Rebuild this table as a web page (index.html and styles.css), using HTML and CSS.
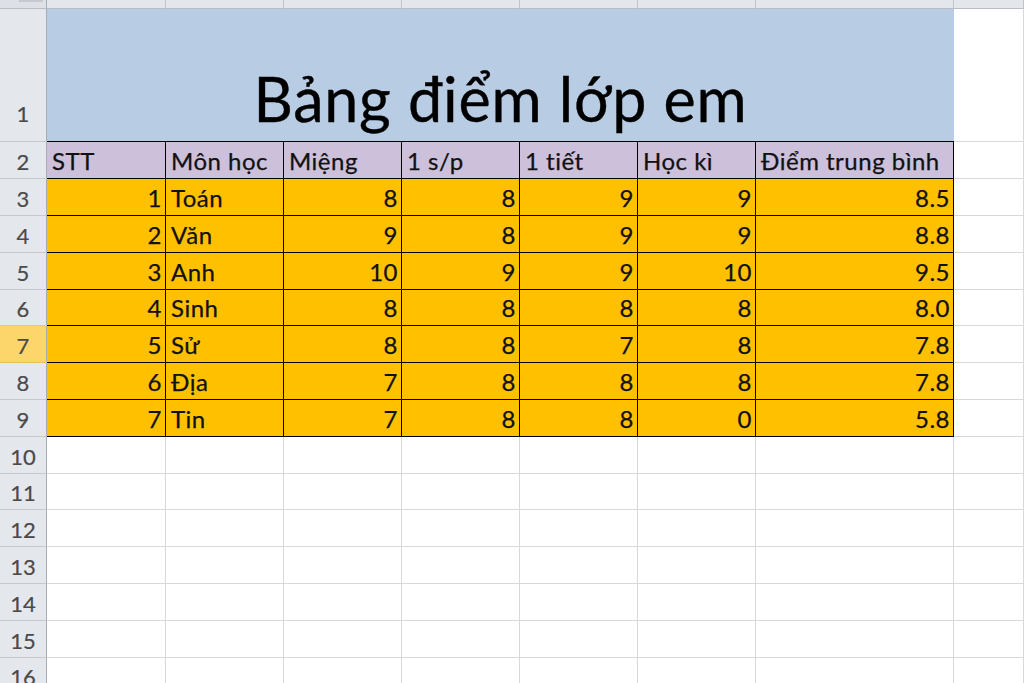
FILE: index.html
```html
<!DOCTYPE html>
<html lang="vi">
<head>
<meta charset="utf-8">
<title>Bảng điểm lớp em</title>
<link rel="stylesheet" href="styles.css">
</head>
<body>
<div class="sheet">
  <div class="corner"><span class="tri"></span></div>
  <div class="colhead"></div><div class="colhead"></div><div class="colhead"></div><div class="colhead"></div><div class="colhead"></div><div class="colhead"></div><div class="colhead"></div><div class="colhead"></div>

  <div class="rowhead r1">1</div>
  <div class="title">Bảng điểm lớp em</div>
  <div class="cell"></div>

  <div class="rowhead">2</div>
  <div class="cell hd">STT</div><div class="cell hd">Môn học</div><div class="cell hd">Miệng</div><div class="cell hd">1 s/p</div><div class="cell hd">1 tiết</div><div class="cell hd">Học kì</div><div class="cell hd last">Điểm trung bình</div>
  <div class="cell"></div>

  <div class="rowhead">3</div>
  <div class="cell d num">1</div><div class="cell d">Toán</div><div class="cell d num">8</div><div class="cell d num">8</div><div class="cell d num">9</div><div class="cell d num">9</div><div class="cell d num last">8.5</div>
  <div class="cell"></div>

  <div class="rowhead">4</div>
  <div class="cell d num">2</div><div class="cell d">Văn</div><div class="cell d num">9</div><div class="cell d num">8</div><div class="cell d num">9</div><div class="cell d num">9</div><div class="cell d num last">8.8</div>
  <div class="cell"></div>

  <div class="rowhead">5</div>
  <div class="cell d num">3</div><div class="cell d">Anh</div><div class="cell d num">10</div><div class="cell d num">9</div><div class="cell d num">9</div><div class="cell d num">10</div><div class="cell d num last">9.5</div>
  <div class="cell"></div>

  <div class="rowhead">6</div>
  <div class="cell d num">4</div><div class="cell d">Sinh</div><div class="cell d num">8</div><div class="cell d num">8</div><div class="cell d num">8</div><div class="cell d num">8</div><div class="cell d num last">8.0</div>
  <div class="cell"></div>

  <div class="rowhead sel">7</div>
  <div class="cell d num">5</div><div class="cell d">Sử</div><div class="cell d num">8</div><div class="cell d num">8</div><div class="cell d num">7</div><div class="cell d num">8</div><div class="cell d num last">7.8</div>
  <div class="cell"></div>

  <div class="rowhead">8</div>
  <div class="cell d num">6</div><div class="cell d">Địa</div><div class="cell d num">7</div><div class="cell d num">8</div><div class="cell d num">8</div><div class="cell d num">8</div><div class="cell d num last">7.8</div>
  <div class="cell"></div>

  <div class="rowhead">9</div>
  <div class="cell d num">7</div><div class="cell d">Tin</div><div class="cell d num">7</div><div class="cell d num">8</div><div class="cell d num">8</div><div class="cell d num">0</div><div class="cell d num last">5.8</div>
  <div class="cell"></div>

  <div class="rowhead">10</div>
  <div class="cell"></div><div class="cell"></div><div class="cell"></div><div class="cell"></div><div class="cell"></div><div class="cell"></div><div class="cell"></div><div class="cell"></div>
  <div class="rowhead">11</div>
  <div class="cell"></div><div class="cell"></div><div class="cell"></div><div class="cell"></div><div class="cell"></div><div class="cell"></div><div class="cell"></div><div class="cell"></div>
  <div class="rowhead">12</div>
  <div class="cell"></div><div class="cell"></div><div class="cell"></div><div class="cell"></div><div class="cell"></div><div class="cell"></div><div class="cell"></div><div class="cell"></div>
  <div class="rowhead">13</div>
  <div class="cell"></div><div class="cell"></div><div class="cell"></div><div class="cell"></div><div class="cell"></div><div class="cell"></div><div class="cell"></div><div class="cell"></div>
  <div class="rowhead">14</div>
  <div class="cell"></div><div class="cell"></div><div class="cell"></div><div class="cell"></div><div class="cell"></div><div class="cell"></div><div class="cell"></div><div class="cell"></div>
  <div class="rowhead">15</div>
  <div class="cell"></div><div class="cell"></div><div class="cell"></div><div class="cell"></div><div class="cell"></div><div class="cell"></div><div class="cell"></div><div class="cell"></div>
  <div class="rowhead">16</div>
  <div class="cell"></div><div class="cell"></div><div class="cell"></div><div class="cell"></div><div class="cell"></div><div class="cell"></div><div class="cell"></div><div class="cell"></div>
</div>
</body>
</html>
```

FILE: styles.css
```css
html, body {
  margin: 0;
  padding: 0;
  background: #ffffff;
  overflow: hidden;
}

.sheet {
  width: 1024px;
  height: 683px;
  overflow: hidden;
  display: grid;
  grid-template-columns: 47px 119px 118px 118px 118px 118px 118px 198px 1fr;
  grid-template-rows: 9px 133px 37px 37px 37px 37px 36px 37px 37px 37px 37px 36px 37px 37px 37px 37px 36px;
  font-family: Lato, "Open Sans", sans-serif;
  font-size: 24px;
  color: #111111;
}

.sheet > div {
  box-sizing: border-box;
  min-width: 0;
  white-space: nowrap;
}

.corner {
  background: #dde1e7;
  border-right: 1px solid #a9adb3;
  border-bottom: 1px solid #b9bdc3;
  position: relative;
}

.tri {
  position: absolute;
  right: 3px;
  top: 0;
  width: 24px;
  height: 2px;
  background: #c5c9cf;
}

.colhead {
  background: #e3e6ea;
  border-right: 1px solid #c2c6cc;
  border-bottom: 1px solid #b9bdc3;
}

.rowhead {
  background: #e4e7ec;
  border-right: 1px solid #a9adb3;
  border-bottom: 1px solid #c6cacf;
  color: #4a4a4a;
  display: flex;
  align-items: flex-end;
  justify-content: center;
  padding-bottom: 5px;
  line-height: 1;
  font-size: 22px;
  -webkit-text-stroke: 0.2px #4a4a4a;
}

.rowhead.r1 {
  padding-bottom: 16px;
}

.rowhead.sel {
  background: #fdd66b;
  border-bottom-color: #e8c060;
}

.cell {
  border-right: 1px solid #d6d8dc;
  border-bottom: 1px solid #d6d8dc;
  display: flex;
  align-items: flex-end;
  padding: 0 4px 5px 5px;
  line-height: 1;
  letter-spacing: 0.5px;
  -webkit-text-stroke: 0.25px #111111;
}

.title {
  grid-column: 2 / 9;
  background: #b8cce4;
  border-bottom: 1px solid #000000;
  display: flex;
  align-items: flex-end;
  justify-content: center;
  font-size: 61px;
  letter-spacing: 0.8px;
  line-height: 1;
  padding-bottom: 12px;
  color: #000000;
  -webkit-text-stroke: 0.4px #000000;
}

.hd {
  background: #ccc0da;
  border-right-color: #000000;
  border-bottom-color: #000000;
}

.d {
  background: #ffc000;
  border-right-color: #000000;
  border-bottom-color: #000000;
}

.num {
  justify-content: flex-end;
  padding-right: 3px;
}
```
